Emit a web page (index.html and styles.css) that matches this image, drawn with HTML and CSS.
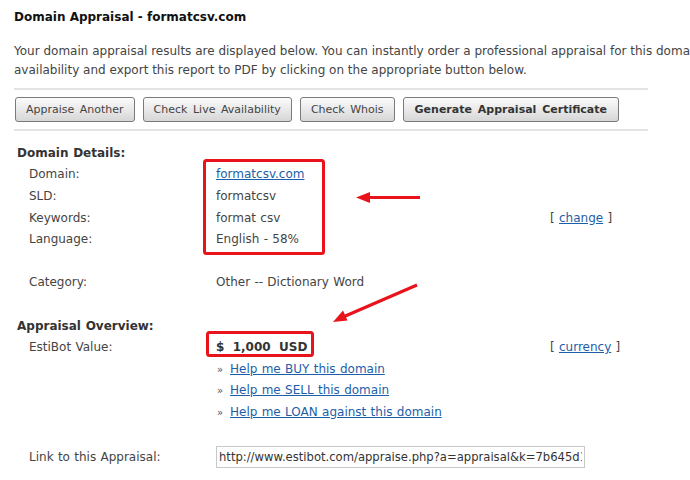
FILE: index.html
```html
<!DOCTYPE html>
<html>
<head>
<meta charset="utf-8">
<link rel="stylesheet" href="styles.css">
</head>
<body>
<div class="page">
  <h1 class="title">Domain Appraisal - formatcsv.com</h1>
  <p class="intro">Your domain appraisal results are displayed below. You can instantly order a professional appraisal for this domain, check its live<br>availability and export this report to PDF by clicking on the appropriate button below.</p>
  <hr class="rule">
  <div class="buttons">
    <button class="btn">Appraise Another</button>
    <button class="btn">Check Live Availability</button>
    <button class="btn">Check Whois</button>
    <button class="btn btn-strong">Generate Appraisal Certificate</button>
  </div>
  <hr class="rule">
  <div class="details">
    <div class="heading">Domain Details:</div>
    <div class="label">Domain:</div><div class="value"><a href="#">formatcsv.com</a></div><div class="extra"></div>
    <div class="label">SLD:</div><div class="value">formatcsv</div><div class="extra"></div>
    <div class="label">Keywords:</div><div class="value">format csv</div><div class="extra">[ <a href="#">change</a> ]</div>
    <div class="label">Language:</div><div class="value">English - 58%</div><div class="extra"></div>
    <div class="blank"></div>
    <div class="label">Category:</div><div class="value">Other -- Dictionary Word</div><div class="extra"></div>
    <div class="blank"></div>
    <div class="heading">Appraisal Overview:</div>
    <div class="label">EstiBot Value:</div><div class="value price">$&nbsp; 1,000&nbsp; USD</div><div class="extra">[ <a href="#">currency</a> ]</div>
    <div class="label"></div><div class="value wide"><span class="raquo">»</span><a href="#">Help me BUY this domain</a></div>
    <div class="label"></div><div class="value wide"><span class="raquo">»</span><a href="#">Help me SELL this domain</a></div>
    <div class="label"></div><div class="value wide"><span class="raquo">»</span><a href="#">Help me LOAN against this domain</a></div>
  </div>
  <div class="details link-row">
    <div class="label">Link to this Appraisal:</div>
    <div class="value wide"><input class="url" type="text" value="http://www.estibot.com/appraise.php?a=appraisal&amp;k=7b645d1e9c2f"></div>
  </div>
</div>
<svg class="annotations" width="690" height="480" viewBox="0 0 690 480">
  <rect x="204.5" y="160.5" width="119" height="93" rx="2" fill="none" stroke="#e8131b" stroke-width="3"/>
  <rect x="207.5" y="332.5" width="105" height="23" rx="2" fill="none" stroke="#e8131b" stroke-width="3"/>
  <line x1="420" y1="197.5" x2="366" y2="197.5" stroke="#e8131b" stroke-width="3"/>
  <polygon points="356,197.5 370,192 370,203" fill="#e8131b"/>
  <line x1="417" y1="285" x2="343" y2="317" stroke="#e8131b" stroke-width="3"/>
  <polygon points="333,322 343,310.5 347.5,320.5" fill="#e8131b"/>
</svg>
</body>
</html>
```
FILE: styles.css
```css
html, body {
  margin: 0;
  padding: 0;
  background: #fff;
}
body {
  position: relative;
  width: 690px;
  height: 480px;
  overflow: hidden;
  font-family: "DejaVu Sans", Verdana, sans-serif;
  font-size: 12px;
  color: #444;
}
.page {
  padding: 8px 0 0 14px;
  width: 900px;
}
.title {
  margin: 0;
  font-size: 12px;
  font-weight: bold;
  line-height: 18px;
  color: #111;
}
.intro {
  margin: 16px 0 0 0;
  line-height: 19px;
  white-space: nowrap;
  color: #444;
}
.rule {
  width: 634px;
  margin: 8px 0 0 0;
  border: 0;
  border-top: 2px solid #e4e4e4;
  height: 0;
}
.buttons {
  display: flex;
  gap: 8px;
  margin: 7px 0 0 1px;
}
.btn {
  height: 25px;
  padding: 0 10px;
  font-family: "DejaVu Sans", Verdana, sans-serif;
  font-size: 11px;
  word-spacing: 2px;
  color: #444;
  border: 1px solid #7a7a7a;
  border-radius: 3px;
  background: linear-gradient(#fbfbfb, #e9e9e9 50%, #d6d6d6);
}
.btn-strong {
  font-weight: bold;
  color: #333;
  padding: 0 11px;
}
.buttons + .rule {
  margin-top: 7px;
}
.details {
  display: grid;
  grid-template-columns: 199px 334px 120px;
  grid-auto-rows: 21.6px;
  align-items: center;
  margin-top: 11px;
  padding-left: 3px;
  word-spacing: 0.5px;
}
.heading {
  grid-column: 1 / -1;
  font-weight: bold;
  color: #333;
}
.label {
  padding-left: 12px;
}
.blank {
  grid-column: 1 / -1;
}
.wide {
  grid-column: 2 / -1;
}
.price {
  font-weight: bold;
  color: #333;
  word-spacing: 0;
}
a {
  color: #1d5ea8;
  text-decoration: underline;
}
.raquo {
  display: inline-block;
  width: 13px;
  padding-left: 1px;
  font-size: 10px;
  color: #555;
}
.link-row {
  grid-auto-rows: 22px;
  margin-top: 23px;
}
.url {
  display: block;
  box-sizing: border-box;
  width: 369px;
  height: 22px;
  margin: 0;
  padding: 0 2px;
  border: 1px solid #c8c8c8;
  font-family: "DejaVu Sans", Verdana, sans-serif;
  font-size: 11.6px;
  word-spacing: 0;
  color: #333;
}
.annotations {
  position: absolute;
  left: 0;
  top: 0;
  pointer-events: none;
}
```
